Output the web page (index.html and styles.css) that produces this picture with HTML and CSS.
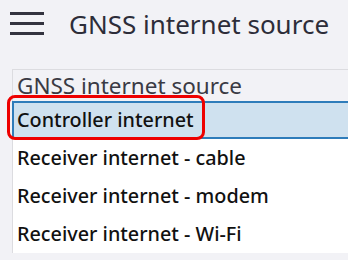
FILE: index.html
```html
<!DOCTYPE HTML>
<html>
<head>
<meta charset="utf-8">
<title>GNSS internet source</title>
<link rel="stylesheet" href="styles.css">
</head>
<body>
<div class="topbar">
  <svg class="menu" width="34" height="26" viewBox="0 0 34 26">
    <rect x="0" y="0" width="34" height="3"/>
    <rect x="0" y="10" width="34" height="3"/>
    <rect x="0" y="20" width="34" height="3"/>
  </svg>
  <h1>GNSS internet source</h1>
</div>

<div class="panel">
  <div class="label">GNSS internet source</div>
  <ul class="options">
    <li class="selected">Controller internet</li>
    <li>Receiver internet - cable</li>
    <li>Receiver internet - modem</li>
    <li>Receiver internet - Wi-Fi</li>
  </ul>
  <div class="mark"></div>
</div>
</body>
</html>
```
FILE: styles.css
```css
body {
  margin:0;
  background:#f2f2f6;
  font-family:"Noto Sans", "Open Sans", sans-serif;
  color:#2d2d39;
  overflow:hidden;
}
.topbar {
  display:flex;
  align-items:center;
  height:48px;
  padding-left:10px;
}
.menu {
  fill:#33333f;
  margin-top:2px;
}
h1 {
  margin:0 0 0 25px;
  font-size:26px;
  font-weight:normal;
}
.panel {
  position:relative;
  margin:21px 0 0 12px;
  border-top:1px solid #dcdce0;
  border-left:1px solid #dcdce0;
}
.label {
  height:31px;
  line-height:31px;
  padding-left:4px;
  font-size:22.5px;
  color:#3a3a44;
  white-space:nowrap;
}
.options {
  list-style:none;
  margin:0;
  padding:0;
  background:#fff;
}
.options li {
  height:38px;
  line-height:38px;
  padding-left:4px;
  font-size:19.8px;
  font-weight:500;
  color:#111;
  white-space:nowrap;
}
.options li.selected {
  height:34px;
  line-height:34px;
  background:#cfe1ef;
  border:2px solid #2e7cba;
  border-right:none;
  margin-left:-1px;
  padding-left:3px;
}
.mark {
  position:absolute;
  left:-6px;
  top:25px;
  width:192px;
  height:39px;
  border:3px solid #ee0000;
  border-radius:8px;
}
```
